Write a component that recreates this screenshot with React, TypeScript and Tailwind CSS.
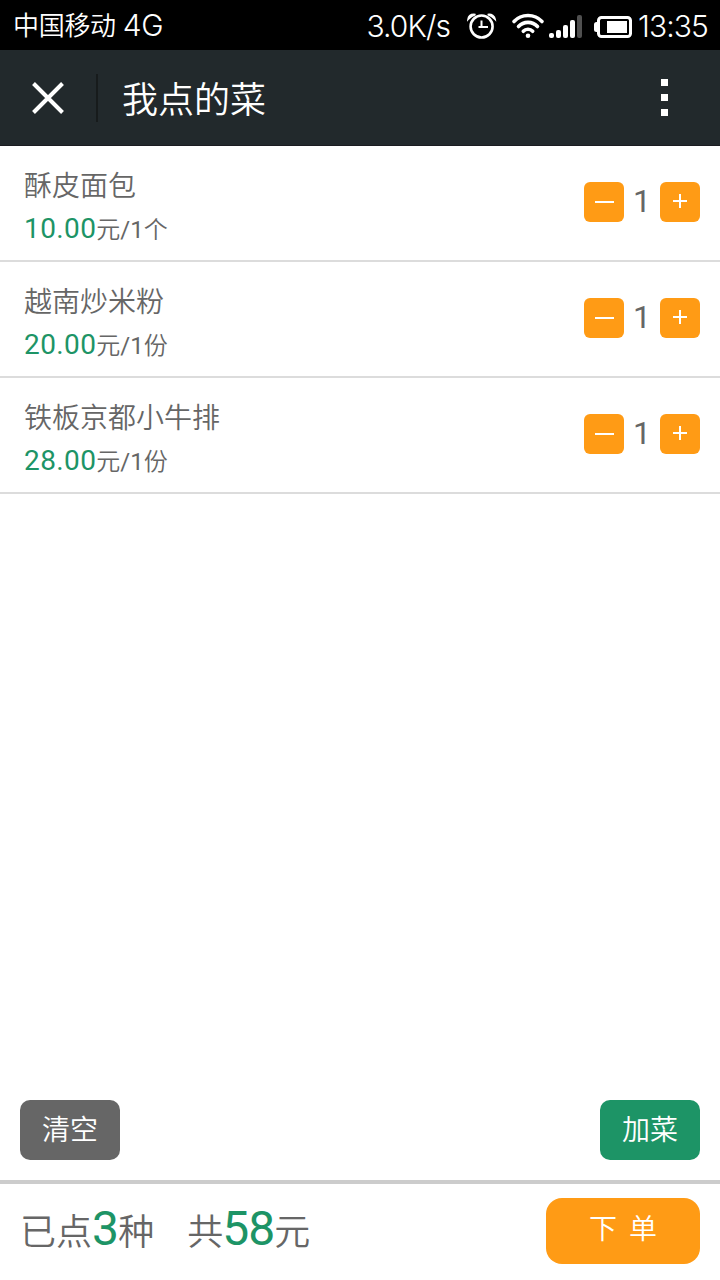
import { useState } from "react";

const initialDishes = [
    { name: "酥皮面包", price: 10, unit: "个", count: 1 },
    { name: "越南炒米粉", price: 20, unit: "份", count: 1 },
    { name: "铁板京都小牛排", price: 28, unit: "份", count: 1 },
]

function StatusBar() {
    return (
        <div className="flex h-[50px] shrink-0 items-center bg-black pl-[13px] pr-[12px] text-white font-['Inter','Noto_Sans_CJK_SC',sans-serif]">
            <div className="flex items-center text-[26px] leading-[48px]">
                <span className="pb-0.5 font-[350] tracking-[-0.3px] font-['Noto_Sans_CJK_SC',sans-serif]">中国移动</span>
                <span className="ml-[7px] text-[30px] font-light tracking-[-0.5px]">4G</span>
            </div>
            <span className="ml-auto pt-[3px] text-[30px] font-light leading-[47px] tracking-[-0.9px]">3.0K/s</span>
            <svg className="ml-[17px] mt-px h-[26px] w-[30px] shrink-0" viewBox="0 0 30 26" fill="none" stroke="white">
                <circle cx="14.600" cy="13.500" r="11" strokeWidth="2.600" />
                <path d="M14.500 7.500v6.500h6.500M11.500 14h3" strokeWidth="2" />
                <path d="M1 6.500C1.500 2.500 4.500 1 8.500 1.500C5.500 2.500 3 4.500 1 6.500zM28.200 6.500C27.700 2.500 24.700 1 20.700 1.500C23.700 2.500 26.200 4.500 28.200 6.500z" fill="white" strokeWidth="1.600" />
            </svg>
            <svg className="ml-[14px] mt-0.5 h-[26px] w-[34px] shrink-0" viewBox="0 0 34 26" fill="none" stroke="white" strokeWidth="3.600" strokeLinecap="round">
                <path d="M3 8.500C10.500 .5 23.500 .5 31 8.500M7.500 13.500C12.500 8 21.500 8 26.500 13.500M12.300 18.300C14.800 15.600 19.200 15.600 21.700 18.300" />
                <circle cx="17" cy="22.800" r="2.300" fill="white" stroke="none" />
            </svg>
            <svg className="ml-[4px] mt-[3px] h-[24px] w-[34px] shrink-0" viewBox="0 0 34 24" fill="white">
                <rect x="0" y="18" width="5" height="5" rx="2" />
                <rect x="7" y="15" width="5" height="8" rx="2" />
                <rect x="14" y="10" width="5" height="13" rx="2" />
                <rect x="21" y="5" width="5" height="18" rx="2" />
                <rect x="28" y="0" width="5" height="23" rx="2" fill="#505050" />
            </svg>
            <svg className="ml-[11px] mt-1 h-[24px] w-[39px] shrink-0" viewBox="0 0 39 24">
                <rect x="0" y="7" width="6" height="10" rx="2.500" fill="white" />
                <rect x="4.500" y="2.500" width="32" height="19" rx="3" fill="none" stroke="white" strokeWidth="3" />
                <rect x="13" y="6" width="20" height="12" fill="white" />
            </svg>
            <span className="ml-[5px] pt-[3px] text-[30px] font-light leading-[47px] tracking-[-0.9px]">13:35</span>
        </div>
    )
}

function Header() {
    return (
        <header className="flex h-24 shrink-0 items-center border-b border-[#1b1c21] bg-[#22292c] text-white">
            <svg className="ml-8 h-8 w-8" viewBox="0 0 32 32" stroke="white" strokeWidth="4">
                <path d="M1.500 1.500l29 29M30.500 1.500l-29 29" />
            </svg>
            <div className="ml-8 h-12 w-0.5 bg-[#171b1c]" />
            <h1 className="ml-6 pt-[7px] text-[36px] leading-[48px]">我点的菜</h1>
            <div className="ml-auto mr-[52px] flex flex-col gap-2">
                <i className="h-[7px] w-[7px] bg-white" />
                <i className="h-[7px] w-[7px] bg-white" />
                <i className="h-[7px] w-[7px] bg-white" />
            </div>
        </header>
    )
}

export default function App() {
    const [dishes, setDishes] = useState(initialDishes)
    const total = dishes.reduce((sum, dish) => sum + dish.price * dish.count, 0)

    const changeCount = (name: string, step: number) => {
        setDishes(dishes
            .map((dish) => dish.name === name ? { ...dish, count: dish.count + step } : dish)
            .filter((dish) => dish.count > 0))
    }

    return (
        <div className="flex h-screen flex-col bg-white font-[350] text-[#666] font-['Roboto','Noto_Sans_CJK_SC',sans-serif]">
            <StatusBar />
            <Header />
            <ul className="flex-1">
                {dishes.map((dish) => (
                    <li key={dish.name} className="flex h-[116px] justify-between border-b-2 border-[#dcdcdc] pl-6 pr-5">
                        <div className="pt-[21px]">
                            <h2 className="text-[28px] leading-[40px]">{dish.name}</h2>
                            <p className="mt-[2px] flex items-baseline text-[24px] leading-[40px]">
                                <span className="text-[28px] font-normal tracking-[0.4px] text-[#1d9466]">{dish.price.toFixed(2)}</span>
                                <span>元<span className="font-normal">/1</span>{dish.unit}</span>
                            </p>
                        </div>
                        <div className="flex h-10 mt-9 items-center">
                            <button aria-label="减少" className="flex h-10 w-10 items-center justify-center rounded-[6px] bg-[#ff9b15]" onClick={() => changeCount(dish.name, -1)}>
                                <span className="h-0.5 w-[19px] bg-white" />
                            </button>
                            <span className="w-9 pb-[2px] text-center text-[32px] font-normal leading-[38px]">{dish.count}</span>
                            <button aria-label="增加" className="flex h-10 w-10 items-center justify-center rounded-[6px] bg-[#ff9b15]" onClick={() => changeCount(dish.name, 1)}>
                                <svg className="mb-0.5 h-[14px] w-[14px]" viewBox="0 0 14 14" stroke="white" strokeWidth="2">
                                    <path d="M0 7h14M7 0v14" />
                                </svg>
                            </button>
                        </div>
                    </li>
                ))}
            </ul>
            <div className="flex justify-between px-5 pb-5 text-[28px] leading-[58px] text-white">
                <button className="h-[60px] w-[100px] rounded-[10px] bg-[#666] pt-0.5" onClick={() => setDishes([])}>清空</button>
                <button className="h-[60px] w-[100px] rounded-[10px] bg-[#1d9466] pt-0.5">加菜</button>
            </div>
            <footer className="flex h-[100px] shrink-0 items-start justify-between border-t-4 border-[#ccc] pl-5 pr-5 pt-[14px]">
                <p className="flex items-baseline pt-px text-[36px] leading-[60px]">
                    <span>已点</span>
                    <span className="tracking-[-0.8px] text-[48px] font-normal text-[#1d9466]">{dishes.length}</span>
                    <span>种</span>
                    <span className="ml-[33px]">共</span>
                    <span className="-ml-px tracking-[-1px] text-[48px] font-normal text-[#1d9466]">{total}</span>
                    <span>元</span>
                </p>
                <button className="h-[66px] w-[154px] rounded-[16px] bg-[#ff9b15] pb-0.5 text-[28px] leading-[64px] text-white">下<span className="inline-block w-3" />单</button>
            </footer>
        </div>
    )
}
